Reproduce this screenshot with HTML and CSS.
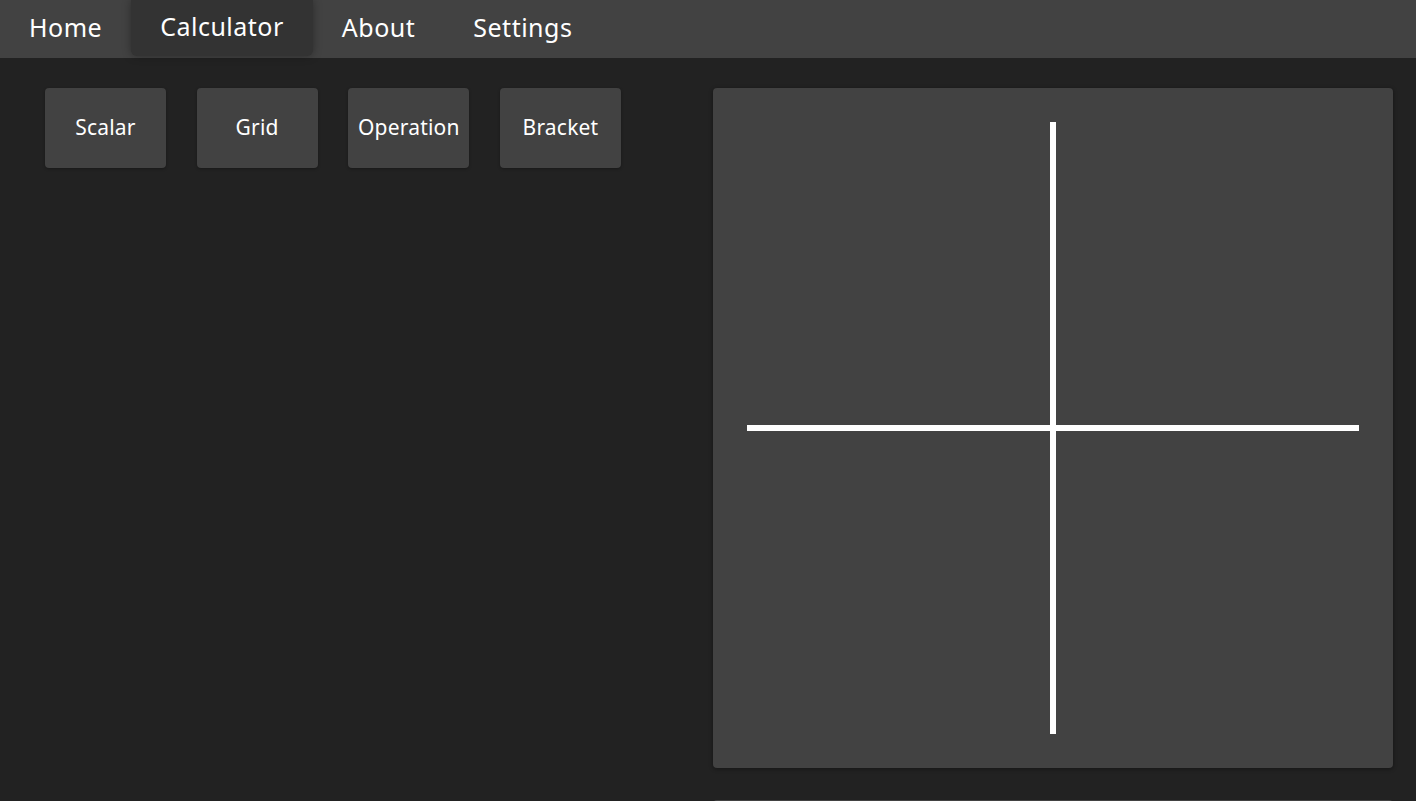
FILE: index.html
```html
<!DOCTYPE html>
<html lang="en">
<head>
<meta charset="utf-8">
<title>Calculator</title>
<link rel="stylesheet" href="styles.css">
</head>
<body>
<nav class="nav">
  <a class="nav-item">Home</a>
  <a class="nav-item active">Calculator</a>
  <a class="nav-item">About</a>
  <a class="nav-item">Settings</a>
</nav>
<main class="main">
  <section class="tools">
    <button class="tool">Scalar</button>
    <button class="tool">Grid</button>
    <button class="tool">Operation</button>
    <button class="tool">Bracket</button>
  </section>
  <section class="right">
    <div class="canvas">
      <div class="axis axis-v"></div>
      <div class="axis axis-h"></div>
    </div>
    <div class="panel2"></div>
  </section>
</main>
</body>
</html>
```
FILE: styles.css
```css
html, body {
  margin: 0;
  padding: 0;
  background: #222222;
  overflow: hidden;
  font-family: "Noto Sans", "Open Sans", sans-serif;
  color: #ffffff;
}
.nav {
  display: flex;
  height: 58px;
  background: #424242;
}
.nav-item {
  display: flex;
  align-items: center;
  padding: 0 29px 5px 29px;
  font-size: 25px;
  letter-spacing: 0.5px;
  color: #ffffff;
  cursor: pointer;
}
.nav-item.active {
  background: #333333;
  border-radius: 0 0 6px 6px;
  box-shadow: 0 0 8px rgba(0,0,0,0.35);
  height: 51px;
}
.main {
  display: flex;
  padding: 30px 23px 0 45px;
}
.tools {
  flex: 1;
  display: flex;
  align-items: flex-start;
  gap: 30.67px;
}
.tool {
  width: 121px;
  height: 80px;
  background: #424242;
  border: none;
  border-radius: 4px;
  color: #ffffff;
  font-family: inherit;
  font-size: 21px;
  letter-spacing: 0.2px;
  padding: 0 0 3px 0;
  box-shadow: 0 1px 3px rgba(0,0,0,0.3);
}
.right {
  display: flex;
  flex-direction: column;
  gap: 32px;
}
.canvas {
  width: 680px;
  height: 680px;
  background: #424242;
  border-radius: 4px;
  box-shadow: 0 1px 4px rgba(0,0,0,0.4);
  display: grid;
  place-items: center;
}
.axis {
  grid-area: 1 / 1;
  background: #ffffff;
}
.axis-v {
  width: 6px;
  height: 612px;
}
.axis-h {
  width: 612px;
  height: 6px;
}
.panel2 {
  width: 680px;
  height: 200px;
  background: #424242;
  border-radius: 4px;
}
```
